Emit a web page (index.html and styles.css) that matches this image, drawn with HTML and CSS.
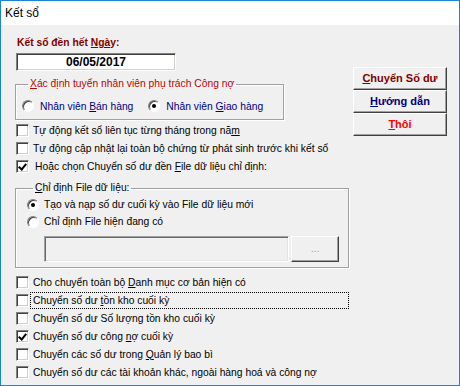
FILE: index.html
```html
<!DOCTYPE html>
<html lang="vi">
<head>
    <meta charset="UTF-8">
    <title>Kết sổ</title>
    <link rel="stylesheet" href="styles.css">
</head>
<body>
    <div class="window">
        <div class="titlebar">Kết sổ</div>
        <div class="content">
            <div class="left">
                <div class="date-label">Kết sổ đền hết <u>Ngà</u>y:</div>
                <div class="date-box">06/05/2017</div>

                <fieldset class="group staff">
                    <legend><u>X</u>ác định tuyển nhân viên phụ trách Công nợ</legend>
                    <div class="radio-row">
                        <label class="opt"><span class="radio"></span><span>Nhân viên <u>B</u>án hàng</span></label>
                        <label class="opt"><span class="radio on"></span><span>Nhân viên <u>G</u>iao hàng</span></label>
                    </div>
                </fieldset>

                <div class="check-list top-checks">
                    <label class="check"><span class="box"></span><span class="text">Tự động kết sổ liên tục từng tháng trong nă<u>m</u></span></label>
                    <label class="check"><span class="box"></span><span class="text">Tự động cập nhật lại toàn bộ chứng từ phát sinh trước khi kết sổ</span></label>
                    <label class="check"><span class="box on"></span><span class="text wide">Hoặc chọn Chuyển số dư đền <u>F</u>ile dữ liệu chỉ định:</span></label>
                </div>

                <fieldset class="group file">
                    <legend><u>C</u>hỉ định File dữ liệu:</legend>
                    <label class="opt"><span class="radio on"></span><span>Tạo và nạp số dư cuối kỳ vào File dữ liệu mới</span></label>
                    <label class="opt"><span class="radio"></span><span>Chỉ định File hiện đang có</span></label>
                    <div class="file-row">
                        <div class="file-input"></div>
                        <div class="browse">...</div>
                    </div>
                </fieldset>

                <div class="check-list bottom-checks">
                    <label class="check"><span class="box"></span><span class="text">Cho chuyển toàn bộ <u>D</u>anh mục cơ bản hiện có</span></label>
                    <label class="check"><span class="box"></span><span class="text focus">Chuyển số dư <u>t</u>ồn kho cuối kỳ</span></label>
                    <label class="check"><span class="box"></span><span class="text">Chuyển số dư Số lượng tồn kho cuối kỳ</span></label>
                    <label class="check"><span class="box on"></span><span class="text">Chuyển số dư công <u>n</u>ợ cuối kỳ</span></label>
                    <label class="check"><span class="box"></span><span class="text">Chuyển các số dư trong <u>Q</u>uản lý bao bì</span></label>
                    <label class="check"><span class="box"></span><span class="text">Chuyển số dư các tài khoản khác, ngoài hàng hoá và công nợ</span></label>
                </div>
            </div>

            <div class="actions">
                <div class="btn go"><u>C</u>huyển Số dư</div>
                <div class="btn help"><u>H</u>ướng dẫn</div>
                <div class="btn quit"><u>T</u>hôi</div>
            </div>
        </div>
    </div>
</body>
</html>
```

FILE: styles.css
```css
body {
    margin: 0;
    background: #f0f0f0;
}
.window {
    width: 460px;
    height: 386px;
    box-sizing: border-box;
    border: 1px solid #1883d7;
    background: #f0f0f0;
    font: 10.3px "Liberation Sans", Tahoma, sans-serif;
    color: #000;
    overflow: hidden;
}
.titlebar {
    height: 24px;
    line-height: 24px;
    padding-left: 4px;
    background: #fff;
    font-size: 12px;
}
.content {
    display: flex;
    gap: 4px;
    padding: 11px 0 0 14px;
}
.left {
    width: 334px;
}
.date-label {
    line-height: 14px;
    margin-left: 2px;
    font-weight: bold;
    color: #800000;
}
.date-box {
    margin: 3px 0 0 1px;
    width: 160px;
    height: 18px;
    box-sizing: border-box;
    background: #fff;
    border: 1px solid;
    border-color: #808080 #fff #fff #808080;
    box-shadow: inset 1px 1px #404040, inset -1px -1px #d4d0c8;
    text-align: center;
    font-size: 12px;
    font-weight: bold;
    line-height: 16px;
}
.group {
    margin: 0;
    padding: 0;
    min-inline-size: 0;
    border: 1px solid #a0a0a0;
    box-shadow: inset 1px 1px #fff, 1px 1px #fff;
}
.group legend {
    margin-left: 6px;
    padding: 0 2px;
    line-height: 14px;
}
.staff {
    margin-top: 6px;
    width: 269px;
    box-sizing: border-box;
    padding: 8px 0 6px 6px;
}
.staff legend {
    color: #c00000;
}
.radio-row {
    display: flex;
    gap: 15px;
}
.opt {
    display: flex;
    align-items: center;
    gap: 6px;
    height: 14px;
    white-space: nowrap;
}
.staff .opt {
    color: #000080;
}
.radio {
    position: relative;
    flex: none;
    width: 12px;
    height: 12px;
    box-sizing: border-box;
    border-radius: 50%;
    background: #fff;
    border: 1px solid;
    border-color: #808080 #fff #fff #808080;
    box-shadow: inset 1px 1px #404040;
}
.radio.on::after {
    content: "";
    position: absolute;
    left: 3px;
    top: 3px;
    width: 4px;
    height: 4px;
    border-radius: 50%;
    background: #000;
}
.check-list {
    display: flex;
    flex-direction: column;
}
.top-checks {
    margin-top: 1px;
}
.bottom-checks {
    margin-top: 5px;
}
.check {
    display: flex;
    align-items: center;
    height: 18px;
}
.box {
    position: relative;
    flex: none;
    width: 13px;
    height: 13px;
    box-sizing: border-box;
    margin-left: 1px;
    background: #fff;
    border: 1px solid;
    border-color: #808080 #fff #fff #808080;
    box-shadow: inset 1px 1px #404040, inset -1px -1px #d4d0c8;
}
.box.on::after {
    content: "";
    position: absolute;
    left: 3px;
    top: 1px;
    width: 3px;
    height: 6px;
    border: solid #000;
    border-width: 0 2px 2px 0;
    transform: rotate(40deg);
}
.text {
    margin-left: 4px;
    white-space: nowrap;
}
.text.wide {
    margin-left: 6px;
}
.text.focus {
    flex: 1;
    margin-left: 1px;
    padding-left: 2px;
    height: 17px;
    line-height: 15px;
    box-sizing: border-box;
    border: 1px dotted #000;
}
.file {
    margin-top: 6px;
    width: 334px;
    box-sizing: border-box;
    padding: 1px 0 5px 11px;
}
.file .opt {
    height: 17px;
    gap: 5px;
}
.file-row {
    display: flex;
    gap: 2px;
    margin: 6px 0 0 17px;
}
.file-input {
    width: 245px;
    height: 26px;
    box-sizing: border-box;
    background: #f0f0f0;
    border: 1px solid;
    border-color: #a0a0a0 #fff #fff #a0a0a0;
    box-shadow: inset 1px 1px #696969, inset -1px -1px #e3e3e3;
}
.browse {
    width: 48px;
    height: 26px;
    box-sizing: border-box;
    border: 1px solid;
    border-color: #fff #404040 #404040 #fff;
    box-shadow: inset -1px -1px #a0a0a0;
    color: #a0a0a0;
    text-align: center;
    line-height: 24px;
}
.actions {
    margin-top: 31px;
    width: 94px;
    align-self: flex-start;
    display: flex;
    flex-direction: column;
}
.btn {
    height: 23px;
    box-sizing: border-box;
    border: 1px solid;
    border-color: #fff #404040 #404040 #fff;
    box-shadow: inset -1px -1px #a0a0a0;
    text-align: center;
    line-height: 21px;
    font-weight: bold;
    font-size: 11px;
}
.go {
    color: #800000;
}
.help {
    color: #000080;
}
.quit {
    color: #ff0000;
}
```
